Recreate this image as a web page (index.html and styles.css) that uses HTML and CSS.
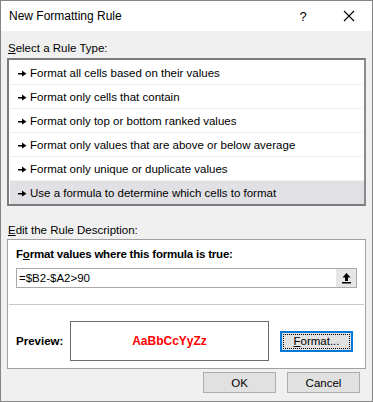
FILE: index.html
```html
<!DOCTYPE html>
<html lang="en">
<head>
<meta charset="UTF-8" />
<title>New Formatting Rule</title>
<link rel="stylesheet" href="styles.css">
</head>
<body>
  <div class="dialog">
    <div class="titlebar">
      <span class="title">New Formatting Rule</span>
      <span class="title-btn help">?</span>
      <span class="title-btn close">
        <svg width="12" height="12" viewBox="0 0 12 12"><path d="M1 1L11 11M11 1L1 11" stroke="#000" stroke-width="1.1" fill="none"/></svg>
      </span>
    </div>

    <div class="content">
      <div class="section-label"><u>S</u>elect a Rule Type:</div>
      <div class="rule-list">
        <div class="rule-item"><svg class="arrow" width="9" height="7" viewBox="0 0 9 7"><path d="M0 3h4v1.4H0z M4 0.5L8.5 3.7L4 6.5z" fill="#000"/></svg>Format all cells based on their values</div>
        <div class="rule-item"><svg class="arrow" width="9" height="7" viewBox="0 0 9 7"><path d="M0 3h4v1.4H0z M4 0.5L8.5 3.7L4 6.5z" fill="#000"/></svg>Format only cells that contain</div>
        <div class="rule-item"><svg class="arrow" width="9" height="7" viewBox="0 0 9 7"><path d="M0 3h4v1.4H0z M4 0.5L8.5 3.7L4 6.5z" fill="#000"/></svg>Format only top or bottom ranked values</div>
        <div class="rule-item"><svg class="arrow" width="9" height="7" viewBox="0 0 9 7"><path d="M0 3h4v1.4H0z M4 0.5L8.5 3.7L4 6.5z" fill="#000"/></svg>Format only values that are above or below average</div>
        <div class="rule-item"><svg class="arrow" width="9" height="7" viewBox="0 0 9 7"><path d="M0 3h4v1.4H0z M4 0.5L8.5 3.7L4 6.5z" fill="#000"/></svg>Format only unique or duplicate values</div>
        <div class="rule-item selected"><svg class="arrow" width="9" height="7" viewBox="0 0 9 7"><path d="M0 3h4v1.4H0z M4 0.5L8.5 3.7L4 6.5z" fill="#000"/></svg>Use a formula to determine which cells to format</div>
      </div>

      <div class="section-label second"><u>E</u>dit the Rule Description:</div>
      <div class="desc-box">
        <div class="formula-label">F<u>o</u>rmat values where this formula is true:</div>
        <div class="formula-row">
          <span class="formula-text">=$B2-$A2&gt;90</span>
          <span class="collapse-btn">
            <svg width="11" height="12" viewBox="0 0 11 12"><path d="M5.5 1L1.5 5.5H4V9H7V5.5H9.5Z" fill="#000"/><rect x="1" y="10" width="9" height="1.5" fill="#000"/></svg>
          </span>
        </div>
        <div class="divider"></div>
        <div class="preview-row">
          <span class="preview-label">Preview:</span>
          <div class="preview-box">AaBbCcYyZz</div>
          <button class="btn format-btn"><span class="focus"><u>F</u>ormat...</span></button>
        </div>
      </div>

      <div class="footer">
        <button class="btn">OK</button>
        <button class="btn">Cancel</button>
      </div>
    </div>
  </div>
</body>
</html>
```

FILE: styles.css
```css
body {
  margin: 0;
  font-family: 'Liberation Sans', Arial, sans-serif;
  font-size: 11.5px;
  color: #000;
  background: #f0f0f0;
}

.dialog {
  width: 373px;
  height: 402px;
  box-sizing: border-box;
  border: 1px solid #858585;
  background: #f0f0f0;
  display: flex;
  flex-direction: column;
  overflow: hidden;
}

.titlebar {
  height: 30px;
  background: #fff;
  display: flex;
  align-items: center;
  flex-shrink: 0;
}
.title {
  flex: 1;
  padding-left: 8px;
  font-size: 12px;
}
.title-btn {
  width: 46px;
  text-align: center;
  display: flex;
  justify-content: center;
}
.help { font-size: 13px; }

.content {
  padding: 0 6px;
  display: flex;
  flex-direction: column;
}

.section-label {
  margin-top: 9px;
  height: 16px;
  line-height: 16px;
  padding-left: 1px;
}
.section-label.second { margin-top: 16px; }

.rule-list {
  margin-top: 2px;
  border: 2px solid #7b7b7b;
  border-right-color: #8a8a8a;
  background: #fff;
  padding: 1px 0 0 1px;
}
.rule-item {
  height: 23px;
  border-bottom: 1px solid #f0f0f0;
  padding-left: 8px;
  display: flex;
  align-items: center;
  gap: 3px;
}
.rule-item:last-child { border-bottom: none; }
.rule-item.selected { background: #e1e0e5; }
.arrow { flex-shrink: 0; margin-top: 1px; }

.desc-box {
  margin-top: 1px;
  border: 1px solid #a0a0a0;
  background: #fff;
  height: 130px;
  box-sizing: border-box;
  padding: 0 8px;
}
.formula-label {
  font-weight: bold;
  letter-spacing: -0.2px;
  margin-top: 6px;
  height: 16px;
  line-height: 16px;
}
.formula-row {
  margin-top: 6px;
  height: 20px;
  box-sizing: border-box;
  border: 1px solid #a9a9a9;
  display: flex;
  align-items: center;
}
.formula-text {
  flex: 1;
  padding-left: 2px;
}
.collapse-btn {
  width: 20px;
  height: 18px;
  background: #e6e6e6;
  border-left: 1px solid #fff;
  display: flex;
  align-items: center;
  justify-content: center;
}
.divider {
  margin: 16px -7px 0;
  border-top: 1px solid #c8c8c8;
}
.preview-row {
  margin-top: 16px;
  display: flex;
  align-items: center;
}
.preview-label {
  font-weight: bold;
  width: 54px;
}
.preview-box {
  width: 199px;
  height: 40px;
  box-sizing: border-box;
  border: 1px solid #6d6d6d;
  display: flex;
  align-items: center;
  justify-content: center;
  color: #f00;
  font-weight: bold;
  font-size: 12px;
}

.btn {
  width: 73px;
  height: 21px;
  box-sizing: border-box;
  background: #e1e1e1;
  border: 1px solid #adadad;
  font-family: inherit;
  font-size: 11.5px;
  color: #000;
  padding: 0;
}
.format-btn {
  margin-left: 11px;
  border: 2px solid #0078d7;
  padding: 1px;
}
.format-btn .focus {
  display: block;
  height: 100%;
  box-sizing: border-box;
  border: 1px dotted #000;
  line-height: 13px;
}

.footer {
  margin-top: 3px;
  display: flex;
  justify-content: flex-end;
  gap: 11px;
  padding-right: 6px;
}
```
